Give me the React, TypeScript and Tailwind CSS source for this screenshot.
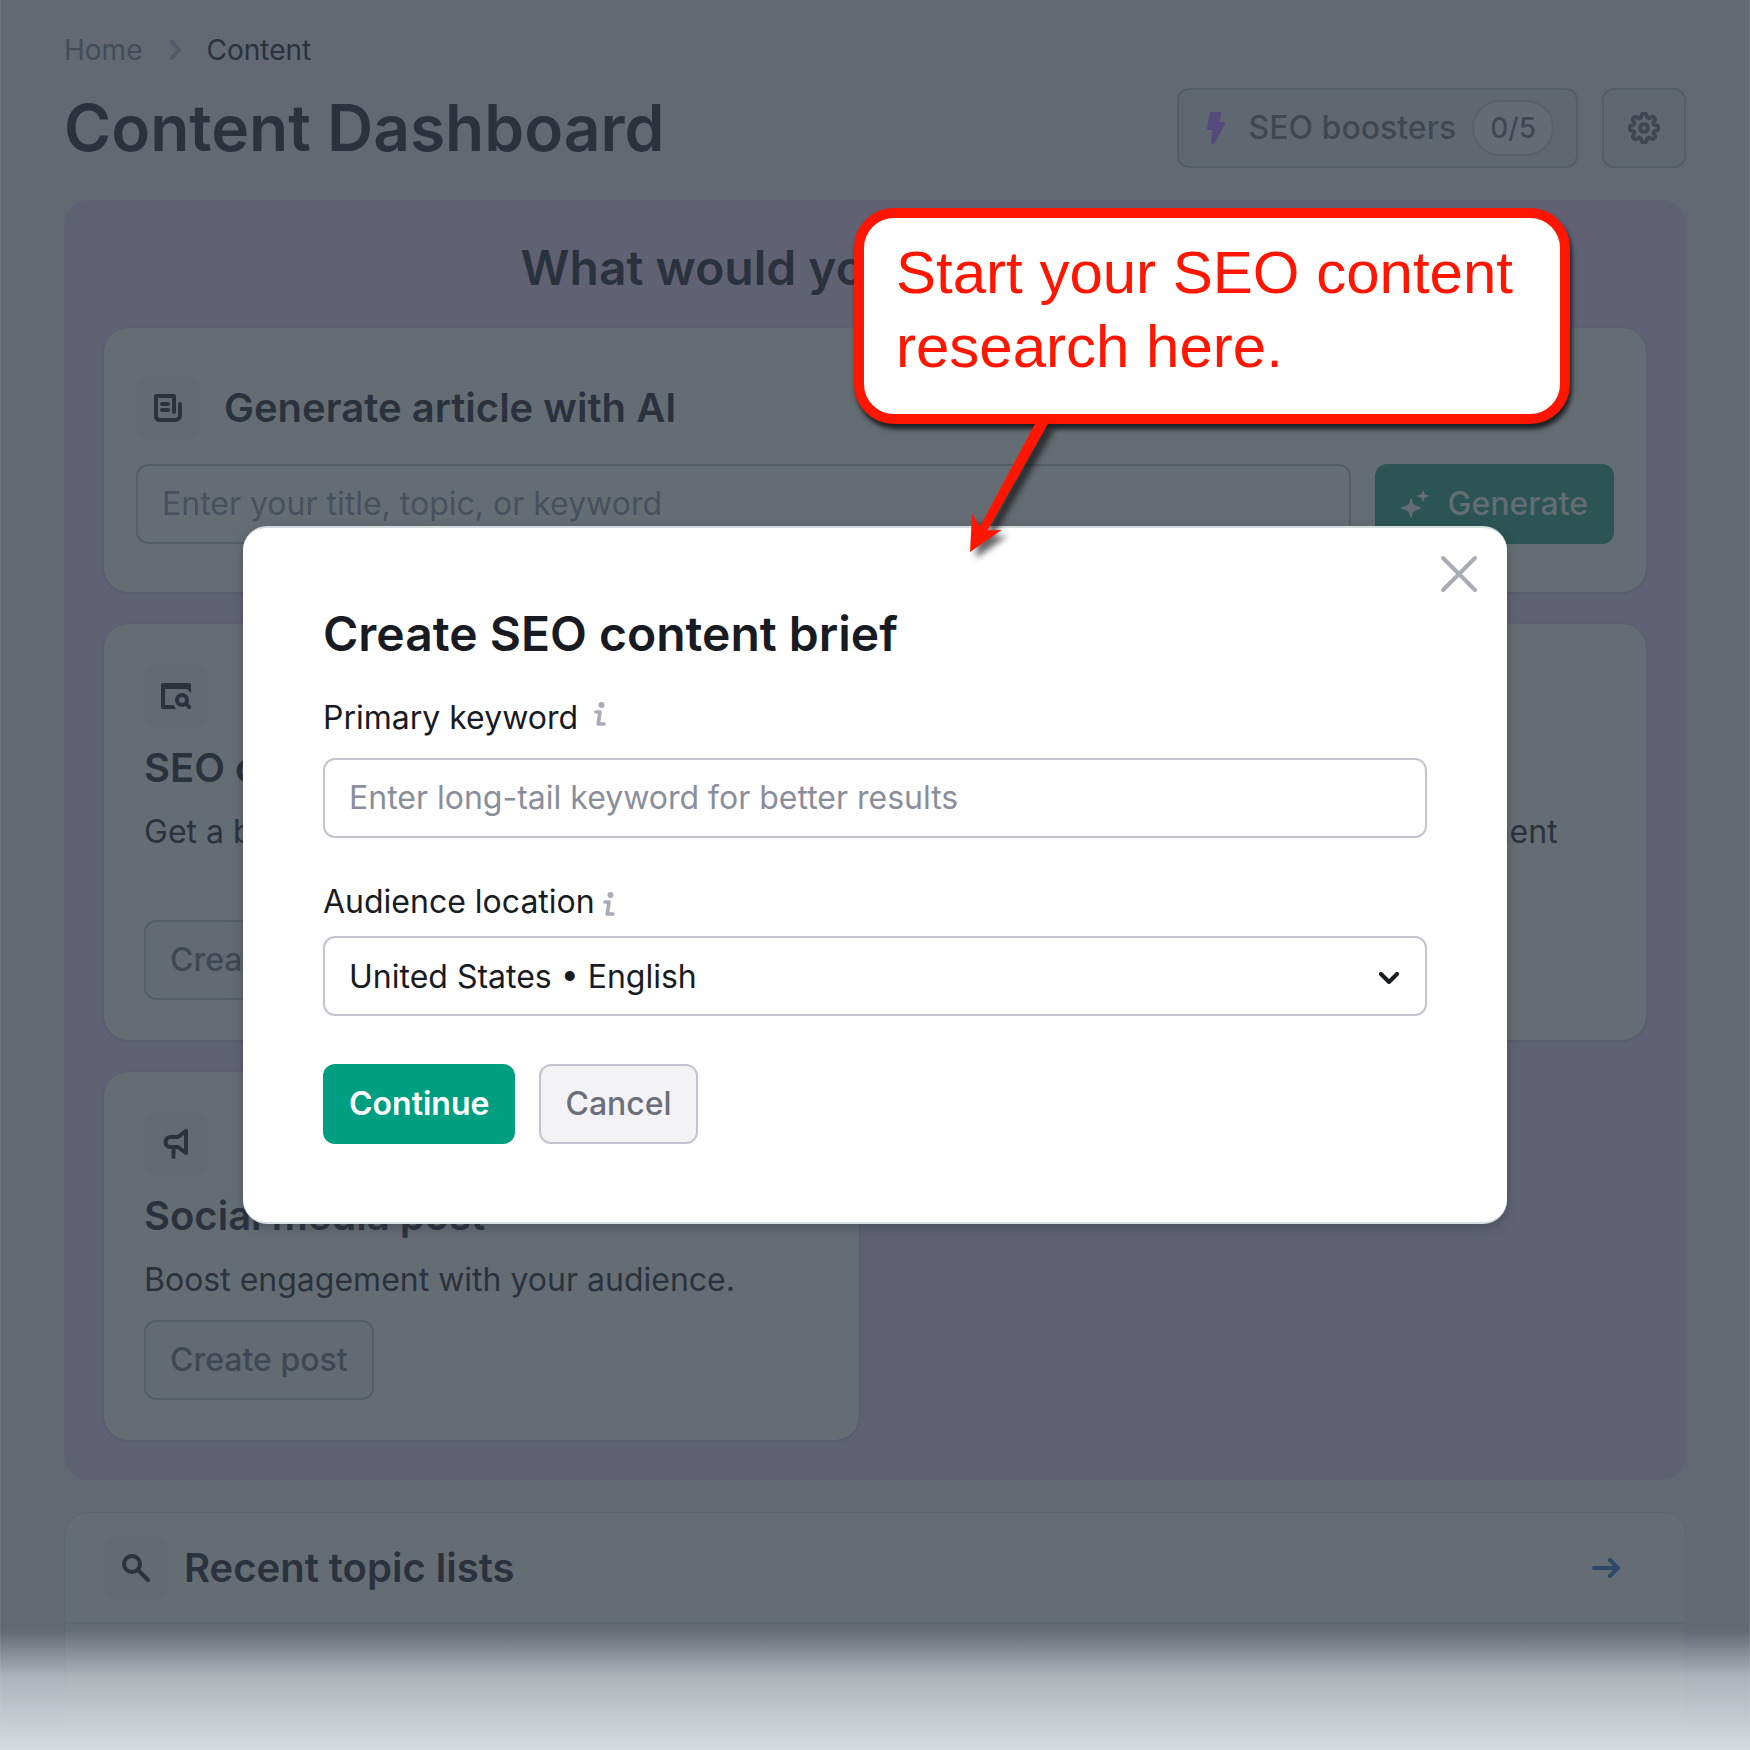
import { useState, type FormEvent, type ReactNode } from "react";
import { FiSettings } from "react-icons/fi";

function IconTile({ children }: { children: ReactNode }) {
  return (
    <span className="flex size-16 shrink-0 items-center justify-center rounded-2xl bg-[#626a74] text-[#2a323e]">
      {children}
    </span>
  );
}

function BoltIcon() {
  return (
    <svg width="18" height="32" viewBox="0 0 18 32" fill="#544a7c" aria-hidden="true">
      <path d="M4.6 0h8.200c1 0 1.600.8 1.400 1.700L12.600 10h4c1.100 0 1.700 1 1.300 2L8.300 30.400C7.400 32.800 3.800 32.200 4 29.700L5.200 18H1.300C.5 18 0 17.400 0 16.600L2.800 1.500C3 .6 3.700 0 4.600 0Z" />
    </svg>
  );
}

function SparkleIcon() {
  return (
    <svg width="28" height="28" viewBox="0 0 28 28" fill="currentColor" aria-hidden="true">
      <path d="M10 8c.8 0 1.200 4.600 2.700 6.300C14.500 16.200 20 17 20 18s-5.500 1.800-7.300 3.700C11.200 23.400 10.800 28 10 28s-1.200-4.600-2.700-6.300C5.500 19.800 0 19 0 18s5.500-1.800 7.300-3.700C8.800 12.600 9.200 8 10 8Z" />
      <path d="M22 0c.7 0 .8 3 1.700 4.100C24.800 5.200 28 5.300 28 6s-3.200.8-4.300 1.900C22.800 9 22.700 12 22 12s-.8-3-1.700-4.100C19.200 6.800 16 6.700 16 6s3.200-.8 4.300-1.900C21.200 3 21.300 0 22 0Z" />
    </svg>
  );
}

function ArticleIcon() {
  return (
    <svg width="28" height="28" viewBox="0 0 28 28" fill="none" stroke="currentColor" strokeWidth="4" strokeLinecap="round" strokeLinejoin="round" aria-hidden="true">
      <path d="M20 18V2H2v20c0 2.500 1.500 4 4 4h15c3 0 5-2 5-5V10" />
      <path d="M8 10h6M8 16h6" />
    </svg>
  );
}

function BrowserSearchIcon() {
  return (
    <svg width="30" height="26" viewBox="0 0 30 26" fill="none" stroke="currentColor" aria-hidden="true">
      <path d="M2 0h26c1.200 0 2 .8 2 2v8l-4-4H4v16h8.500l2.500 4H2c-1.200 0-2-.8-2-2V2C0 .8.800 0 2 0Z" fill="currentColor" stroke="none" />
      <circle cx="21" cy="17" r="5" strokeWidth="4" />
      <path d="m25 21 3.200 3.200" strokeWidth="4" strokeLinecap="round" />
    </svg>
  );
}

function MegaphoneIcon() {
  return (
    <svg width="26" height="30" viewBox="0 0 26 30" fill="none" stroke="currentColor" strokeWidth="4" strokeLinecap="round" strokeLinejoin="round" aria-hidden="true">
      <path d="M23 2v22l-8-6H7.500a5 5 0 0 1 0-10H15Z" />
      <path d="M10.500 18v10" />
    </svg>
  );
}

function SearchIcon() {
  return (
    <svg width="28" height="28" viewBox="0 0 28 28" fill="none" stroke="currentColor" strokeWidth="4" strokeLinecap="round" aria-hidden="true">
      <circle cx="10" cy="10" r="8" />
      <path d="m16 16 10 10" />
    </svg>
  );
}

function InfoIcon() {
  return (
    <svg width="12" height="24" viewBox="0 0 12 24" fill="none" stroke="#a9abb6" strokeWidth="3.600" strokeLinecap="round" strokeLinejoin="round" aria-hidden="true">
      <circle cx="7.500" cy="3" r="3" fill="#a9abb6" stroke="none" />
      <path d="M2 10h4L4.200 22H10" />
    </svg>
  );
}

type ToolCardProps = {
  icon: ReactNode;
  title: string;
  description: string;
  action: string;
};

function ToolCard({ icon, title, description, action }: ToolCardProps) {
  return (
    <article className="flex flex-col items-start rounded-3xl bg-[#656d74] p-10 shadow-[0_1px_3px_#545868]">
      <IconTile>{icon}</IconTile>
      <h3 className="mt-4 text-[40px] leading-12 font-semibold">{title}</h3>
      <p className="mt-4 mb-4 text-[32px] leading-12">{description}</p>
      <button
        type="button"
        className="mt-auto h-20 rounded-xl border-2 border-[#545e69] bg-[#626a74] px-6 text-[32px] font-medium text-[#3f4852]"
      >
        {action}
      </button>
    </article>
  );
}

const tools: ToolCardProps[] = [
  {
    icon: <BrowserSearchIcon />,
    title: "SEO content brief",
    description: "Get a brief for your next article.",
    action: "Create brief",
  },
  {
    icon: <ArticleIcon />,
    title: "Optimize content",
    description: "Check your content and get improvement ideas.",
    action: "Check content",
  },
  {
    icon: <MegaphoneIcon />,
    title: "Social media post",
    description: "Boost engagement with your audience.",
    action: "Create post",
  },
];

function Dashboard() {
  return (
    <div className="relative flex min-h-screen flex-col overflow-hidden bg-[#626973] px-16 pt-8 text-[#2a323e] shadow-[inset_1px_0_#6c7580,inset_-1px_0_#6c7580]">
      <nav aria-label="Breadcrumb" className="flex items-center text-[28px] leading-9">
        <a href="#home" className="text-[#434d58]">Home</a>
        <svg className="mr-[22px] ml-[26px] h-5 w-4" viewBox="0 0 16 20" fill="none" stroke="#525a69" strokeWidth="4" strokeLinecap="round" strokeLinejoin="round" aria-hidden="true">
          <path d="m4 2 7 8-7 8" />
        </svg>
        <a href="#content" aria-current="page">Content</a>
      </nav>

      <header className="mt-5 flex items-center justify-between">
        <h1 className="text-[64px] leading-20 font-semibold">Content Dashboard</h1>
        <div className="flex gap-6 text-[#3f4852]">
          <button
            type="button"
            className="flex h-20 items-center rounded-xl border-2 border-[#545e69] bg-[#5f6870] pr-[22px] pl-7 text-[32px] font-medium"
          >
            <BoltIcon />
            <span className="ml-6">SEO boosters</span>
            <span className="ml-4 flex h-14 items-center rounded-full border-2 border-[#59616b] bg-[#656b74] px-4 text-[28px]">
              0/5
            </span>
          </button>
          <button
            type="button"
            aria-label="Settings"
            className="flex h-20 w-[84px] items-center justify-center rounded-xl border-2 border-[#545e69] bg-[#5f6870]"
          >
            <FiSettings size={32} strokeWidth={3} />
          </button>
        </div>
      </header>

      <section className="mt-8 rounded-3xl bg-[#606274] px-10 pt-10 pb-10">
        <h2 className="text-center text-[48px] leading-14 font-semibold">What would you like to create?</h2>

        <article className="mt-8 rounded-3xl bg-[#656d74] px-8 py-12 shadow-[0_1px_3px_#545868]">
          <div className="flex items-center gap-6">
            <IconTile>
              <ArticleIcon />
            </IconTile>
            <h3 className="text-[40px] leading-12 font-semibold">Generate article with AI</h3>
          </div>
          <div className="mt-6 flex gap-6">
            <input
              type="text"
              aria-label="Article title, topic, or keyword"
              placeholder="Enter your title, topic, or keyword"
              className="h-20 min-w-0 flex-1 rounded-xl border-2 border-[#545e69] bg-transparent px-6 pb-0.5 text-[32px] placeholder:text-[#47515d]"
            />
            <button
              type="button"
              className="flex h-20 items-center gap-[18px] rounded-xl bg-[#2c5454] px-[26px] text-[32px] font-medium text-[#656d74]"
            >
              <SparkleIcon />
              Generate
            </button>
          </div>
        </article>

        <div className="mt-8 grid grid-cols-2 gap-8">
          {tools.map((tool) => (
            <ToolCard key={tool.title} {...tool} />
          ))}
        </div>
      </section>

      <section className="mt-8 flex-1 rounded-t-3xl border border-b-0 border-[#5e6871] bg-[#656d74]">
        <div className="flex items-center border-b-2 border-[#5c6770] px-[39px] pt-[23px] pb-[22px]">
          <IconTile>
            <SearchIcon />
          </IconTile>
          <h2 className="ml-4 text-[40px] leading-12 font-semibold">Recent topic lists</h2>
          <a href="#topics" aria-label="Open recent topic lists" className="mr-[26px] ml-auto">
            <svg width="28" height="20" viewBox="0 0 28 20" fill="none" stroke="#2c4868" strokeWidth="4" strokeLinecap="round" strokeLinejoin="round" aria-hidden="true">
              <path d="M2 10h23M18 2l8 8-8 8" />
            </svg>
          </a>
        </div>
      </section>

      <div className="pointer-events-none absolute inset-x-0 bottom-0 h-30 bg-linear-to-b from-[#d5dde0]/0 via-[#d5dde0]/65 via-40% to-[#d5dde0]" />
    </div>
  );
}

function BriefDialog() {
  const [keyword, setKeyword] = useState("");
  const [location, setLocation] = useState("us-en");

  function handleSubmit(e: FormEvent) {
    e.preventDefault();
  }

  return (
    <form
      role="dialog"
      aria-labelledby="brief-title"
      onSubmit={handleSubmit}
      className="relative rounded-3xl border-y-2 border-[#d5dde0] bg-white px-20 pt-[78px] pb-[78px] text-[#191b23] shadow-[0_4px_12px_#25293155]"
    >
      <button type="button" aria-label="Close" className="absolute top-[18px] right-5 p-2">
        <svg width="40" height="40" viewBox="0 0 40 40" fill="none" stroke="#a9abb6" strokeWidth="4" strokeLinecap="round" aria-hidden="true">
          <path d="m4 4 32 32M36 4 4 36" />
        </svg>
      </button>

      <h2 id="brief-title" className="text-[48px] leading-14 font-semibold">Create SEO content brief</h2>

      <div className="mt-8 flex items-start gap-4 text-[32px] leading-12">
        <label htmlFor="keyword">Primary keyword</label>
        <span className="flex h-10 items-center">
          <InfoIcon />
        </span>
      </div>
      <input
        id="keyword"
        type="text"
        value={keyword}
        onChange={(e) => setKeyword(e.target.value)}
        placeholder="Enter long-tail keyword for better results"
        className="mt-4 block h-20 w-full rounded-xl border-2 border-[#c4c4cf] px-6 pb-0.5 text-[32px] placeholder:text-[#8a8e9b]"
      />

      <div className="mt-10 flex items-center gap-2 text-[32px] leading-12">
        <label htmlFor="location">Audience location</label>
        <span className="flex h-10 items-center pt-1">
          <InfoIcon />
        </span>
      </div>
      <div className="relative mt-[10px]">
        <select
          id="location"
          value={location}
          onChange={(e) => setLocation(e.target.value)}
          className="block h-20 w-full appearance-none rounded-xl border-2 border-[#c4c4cf] bg-white px-6 pt-0.5 text-[32px]"
        >
          <option value="us-en">United States • English</option>
        </select>
        <svg className="pointer-events-none absolute top-9 right-7" width="20" height="12" viewBox="0 0 20 12" fill="none" stroke="#191b23" strokeWidth="4" strokeLinecap="round" strokeLinejoin="round" aria-hidden="true">
          <path d="m2 2 8 8 8-8" />
        </svg>
      </div>

      <div className="mt-12 flex gap-6 text-[32px]">
        <button type="submit" className="h-20 rounded-xl bg-[#009f81] px-[26px] font-semibold text-white">
          Continue
        </button>
        <button type="button" className="h-20 rounded-xl border-2 border-[#c4c4cf] bg-[#f3f3f5] px-6 font-medium text-[#6c6e79]">
          Cancel
        </button>
      </div>
    </form>
  );
}

function Callout() {
  return (
    <div className="absolute -top-[318px] left-[611px] w-[716px]">
      <p className="h-[216px] rounded-[40px] border-10 border-[#ff1600] bg-white px-8 pt-[18px] font-['Liberation_Sans',Arial,sans-serif] text-[60px] leading-[74px] text-[#ff1600] shadow-[2px_5px_5px_#1c1f22]">
        Start your SEO content research here.
      </p>
      <svg
        className="absolute top-[206px] left-[106px] overflow-visible drop-shadow-[6px_6px_3px_#00000099]"
        width="90"
        height="140"
        viewBox="0 0 90 140"
        fill="#ff1600"
        aria-hidden="true"
      >
        <path d="M76 8H89L27.500 116.500 41.500 116 10 138 12 100 20 112.500Z" />
      </svg>
    </div>
  );
}

export default function App() {
  return (
    <div className="relative font-[Inter,sans-serif]">
      <Dashboard />
      <div className="absolute inset-0 flex items-center justify-center px-6">
        <div className="relative w-full max-w-[1264px]">
          <BriefDialog />
          <Callout />
        </div>
      </div>
    </div>
  );
}
